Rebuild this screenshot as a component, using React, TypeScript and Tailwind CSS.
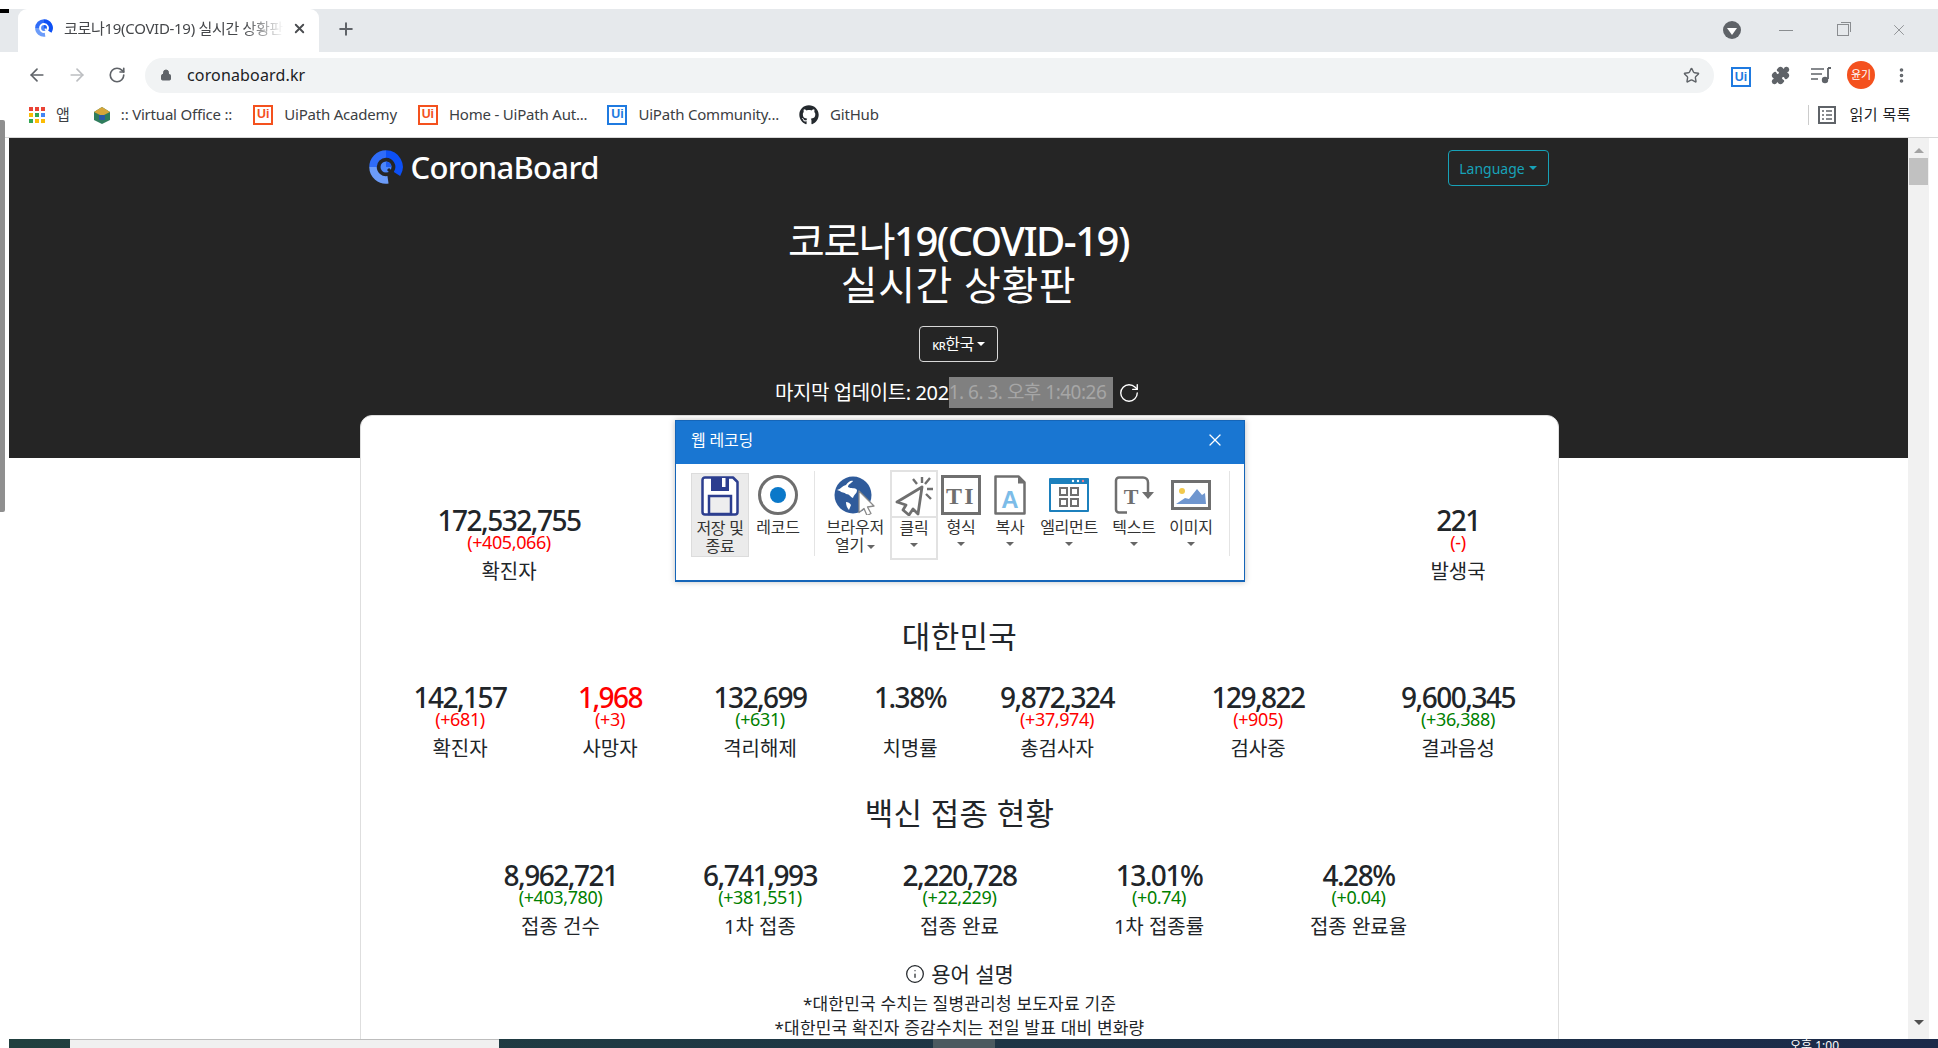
import { ArrowLeft, ArrowRight, RotateCw, Lock, Star, Puzzle, MoreVertical, X, Plus, Info } from 'lucide-react';
import { FaGithub } from 'react-icons/fa';
import type { ReactNode } from 'react';

const FONT = "font-['Noto_Sans','Noto_Sans_CJK_KR',sans-serif]";

type Stat = { value: string; delta?: string; deltaColor?: string; label: string; valueColor?: string; width?: string };

const koreaStats: Stat[] = [
  { value: '142,157', delta: '(+681)', deltaColor: 'text-[#ff0000]', label: '확진자', width: 'w-[150px]' },
  { value: '1,968', delta: '(+3)', deltaColor: 'text-[#ff0000]', label: '사망자', valueColor: 'text-[#ff0000]', width: 'w-[150px]' },
  { value: '132,699', delta: '(+631)', deltaColor: 'text-[#008000]', label: '격리해제', width: 'w-[150px]' },
  { value: '1.38%', label: '치명률', width: 'w-[150px]' },
  { value: '9,872,324', delta: '(+37,974)', deltaColor: 'text-[#ff0000]', label: '총검사자', width: 'w-[150px] -ml-[3px]' },
  { value: '129,822', delta: '(+905)', deltaColor: 'text-[#ff0000]', label: '검사중', width: 'w-[200px] ml-[26px]' },
  { value: '9,600,345', delta: '(+36,388)', deltaColor: 'text-[#008000]', label: '결과음성', width: 'w-[200px]' },
];

const vaccineStats: Stat[] = [
  { value: '8,962,721', delta: '(+403,780)', deltaColor: 'text-[#008000]', label: '접종 건수', width: 'w-[199.5px]' },
  { value: '6,741,993', delta: '(+381,551)', deltaColor: 'text-[#008000]', label: '1차 접종', width: 'w-[199.5px]' },
  { value: '2,220,728', delta: '(+22,229)', deltaColor: 'text-[#008000]', label: '접종 완료', width: 'w-[199.5px]' },
  { value: '13.01%', delta: '(+0.74)', deltaColor: 'text-[#008000]', label: '1차 접종률', width: 'w-[199.5px]' },
  { value: '4.28%', delta: '(+0.04)', deltaColor: 'text-[#008000]', label: '접종 완료율', width: 'w-[199.5px]' },
];

function StatBox({ stat }: { stat: Stat }) {
  return (
    <div className={`flex flex-col items-center shrink-0 ${stat.width ?? ''}`}>
      <div className={`text-[28px] leading-[30px] font-medium tracking-[-1.5px] ${stat.valueColor ?? 'text-[#212529]'}`}>{stat.value}</div>
      <div className={`text-[18px] leading-[20px] h-[20px] tracking-[-0.4px] -mt-[3px] ${stat.deltaColor ?? ''}`}>{stat.delta}</div>
      <div className="text-[20px] leading-[24px] mt-[8px] text-[#212529]">{stat.label}</div>
    </div>
  );
}

function UiLogo({ color, size = 20 }: { color: string; size?: number }) {
  return (
    <span
      className="inline-flex items-center justify-center border-2 bg-white font-bold leading-none font-['Liberation_Sans',sans-serif] shrink-0"
      style={{ borderColor: color, color, width: size, height: size, fontSize: size * 0.62 }}
    >
      Ui
    </span>
  );
}

function Bookmark({ icon, label, className }: { icon: ReactNode; label: string; className?: string }) {
  return (
    <div className={`flex items-center gap-[11px] ${className ?? ''}`}>
      {icon}
      <span className="text-[15px] text-[#3c4043] tracking-[-0.2px] whitespace-nowrap">{label}</span>
    </div>
  );
}

function AppsIcon() {
  const colors = ['#ea4335', '#ea4335', '#ea4335', '#fbbc04', '#34a853', '#4285f4', '#34a853', '#fbbc04', '#fbbc04'];
  return (
    <div className="grid grid-cols-3 gap-[2px] w-[16px] shrink-0">
      {colors.map((c, i) => (
        <span key={i} className="w-[4px] h-[4px]" style={{ backgroundColor: c }} />
      ))}
    </div>
  );
}

function CoronaLogo({ size, bg = '#252525' }: { size: number; bg?: string }) {
  return (
    <svg width={size} height={size} viewBox="0 0 34 34" className="shrink-0">
      <g fill="none" strokeWidth="7.5">
        <path d="M17 4a13 13 0 0 1 11 20" stroke="#0d50f5" />
        <path d="M17 4a13 13 0 0 0-13 13" stroke="#2f6cf8" />
        <path d="M4 17a13 13 0 0 0 15 12.8" stroke="#6c9cf9" />
      </g>
      <circle cx="17" cy="17" r="5.5" fill="#4c86f8" />
      <path d="M17 11.5a5.5 5.5 0 0 1 5.5 5.5H17z" fill="#1d5cf0" />
      <path d="M19 19l9 9" stroke={bg} strokeWidth="3" />
    </svg>
  );
}

function Caret({ className }: { className?: string }) {
  return <span className={`inline-block w-0 h-0 border-x-[4px] border-x-transparent border-t-[4px] ${className ?? 'border-t-[#666]'}`} />;
}

function SaveIcon() {
  return (
    <svg width="38" height="40" viewBox="0 0 38 40">
      <path d="M4 1.5h28l4.5 4.5v30a2.5 2.5 0 0 1-2.5 2.5H4A2.5 2.5 0 0 1 1.5 36V4A2.5 2.5 0 0 1 4 1.5z" fill="#fff" stroke="#2c3e8f" strokeWidth="2.5" strokeLinejoin="round" />
      <path d="M10 2h18v13H10z" fill="#2c3e8f" />
      <rect x="21" y="2" width="3.5" height="9" fill="#fff" />
      <rect x="8" y="20" width="22" height="18" fill="#eeeeee" stroke="#2c3e8f" strokeWidth="2.5" />
    </svg>
  );
}

function RecordIcon() {
  return (
    <svg width="40" height="40" viewBox="0 0 40 40">
      <circle cx="20" cy="20" r="18.5" fill="#fff" stroke="#6e6e6e" strokeWidth="3" />
      <circle cx="20" cy="20" r="8" fill="#0b78c9" />
    </svg>
  );
}

function BrowserIcon() {
  return (
    <svg width="42" height="40" viewBox="0 0 42 40">
      <circle cx="19" cy="20" r="18.5" fill="#2f5b9b" />
      <path d="M3 15c4-1 5-4 9-5 2-3 5-5 7-4-1 2-5 3-5 6 3 2 7 0 9 3 0 4-3 4-4 8-3-1-3-4-7-4-1-2-5-1-6-3z" fill="#fff" />
      <path d="M12 27c2 0 4 1 5 3l-2 5c-2-2-3-5-3-8z" fill="#fff" />
      <path d="M25 16l15 15-6.5 1 3.5 6.5-4 2-3-7-5 4z" fill="#fff" stroke="#8a8a8a" strokeWidth="1.3" strokeLinejoin="round" />
    </svg>
  );
}

function ClickIcon() {
  return (
    <svg width="38" height="40" viewBox="0 0 38 40">
      <path d="M27 11L2 26l9 3-3 5 6 5 4-6 5 5z" fill="#fff" stroke="#6f6f6f" strokeWidth="2.8" strokeLinejoin="round" />
      <g stroke="#6f6f6f" strokeWidth="2.4">
        <path d="M27 1v6M18 3l4 5M35 2l-5 6M38 13h-6M36 23l-5-5" />
      </g>
    </svg>
  );
}

function FormatIcon() {
  return (
    <svg width="40" height="40" viewBox="0 0 40 40">
      <rect x="1.5" y="1.5" width="37" height="37" fill="#fff" stroke="#6f6f6f" strokeWidth="3" />
      <text x="13" y="29" textAnchor="middle" fontFamily="Liberation Serif, serif" fontWeight="700" fontSize="24" fill="#6f6f6f">T</text>
      <text x="28" y="29" textAnchor="middle" fontFamily="Liberation Serif, serif" fontWeight="700" fontSize="24" fill="#6f6f6f">I</text>
    </svg>
  );
}

function CopyIcon() {
  return (
    <svg width="32" height="40" viewBox="0 0 32 40">
      <path d="M1.5 1.5h23l6 6v31h-29z" fill="#fff" stroke="#6f6f6f" strokeWidth="2.5" strokeLinejoin="round" />
      <path d="M24 1.5v7h6.5z" fill="#6f6f6f" />
      <text x="16" y="33" textAnchor="middle" fontFamily="Liberation Sans, sans-serif" fontWeight="700" fontSize="24" fill="#7cbce8">A</text>
    </svg>
  );
}

function ElementIcon() {
  return (
    <svg width="40" height="34" viewBox="0 0 40 34">
      <rect x="0" y="0" width="40" height="34" rx="1" fill="#1c80bd" />
      <rect x="2" y="6" width="36" height="26" fill="#fff" />
      <circle cx="24" cy="3" r="1.2" fill="#fff" />
      <circle cx="29" cy="3" r="1.2" fill="#fff" />
      <circle cx="34" cy="3" r="1.2" fill="#f47c8a" />
      <g fill="none" stroke="#6f6f6f" strokeWidth="2">
        <rect x="11" y="10" width="7" height="7" />
        <rect x="22" y="10" width="7" height="7" />
        <rect x="11" y="21" width="7" height="7" />
        <rect x="22" y="21" width="7" height="7" />
      </g>
    </svg>
  );
}

function TextIcon() {
  return (
    <svg width="40" height="38" viewBox="0 0 40 38">
      <path d="M13 36.5H5a3 3 0 0 1-3-3V4.5a3 3 0 0 1 3-3h24c3 0 5 2 5 5v11" fill="none" stroke="#6f6f6f" strokeWidth="2.5" />
      <path d="M28 16h12l-6 7z" fill="#6f6f6f" />
      <text x="17" y="28" textAnchor="middle" fontFamily="Liberation Serif, serif" fontWeight="700" fontSize="22" fill="#6f6f6f">T</text>
    </svg>
  );
}

function ImageIcon() {
  return (
    <svg width="40" height="30" viewBox="0 0 40 30">
      <rect x="1.5" y="1.5" width="37" height="27" fill="#fff" stroke="#6f6f6f" strokeWidth="3" />
      <circle cx="11" cy="11" r="3" fill="#f2c94c" />
      <path d="M5 24l9-6 4 1 8-10 5 6 3-2 1 11z" fill="#6f96cf" />
    </svg>
  );
}

type Tool = { icon: ReactNode; lines: string[]; width: string; caret?: boolean; inlineCaret?: boolean; divider?: boolean };

const tools: Tool[] = [
  { icon: <SaveIcon />, lines: ['저장 및', '종료'], width: 'w-[58px] mt-[3px] h-[84px] bg-[#ebebeb] border border-[#dcdcdc]' },
  { icon: <RecordIcon />, lines: ['레코드'], width: 'w-[58px] mt-[3px]' },
  { icon: <BrowserIcon />, lines: ['브라우저', '열기'], inlineCaret: true, width: 'w-[56px] ml-[20px] mt-[3px]' },
  { icon: <ClickIcon />, lines: ['클릭'], caret: true, divider: true, width: 'w-[48px] ml-[7px] h-[90px] pt-[3px] border-2 border-[#e2e2e2]' },
  { icon: <FormatIcon />, lines: ['형식'], caret: true, width: 'w-[46px] mt-[3px]' },
  { icon: <CopyIcon />, lines: ['복사'], caret: true, width: 'w-[48px] ml-[2px] mt-[3px]' },
  { icon: <ElementIcon />, lines: ['엘리먼트'], caret: true, width: 'w-[70px] mt-[3px]' },
  { icon: <TextIcon />, lines: ['텍스트'], caret: true, width: 'w-[60px] mt-[3px]' },
  { icon: <ImageIcon />, lines: ['이미지'], caret: true, width: 'w-[54px] mt-[3px]' },
];

function ToolButton({ tool }: { tool: Tool }) {
  return (
    <div className={`flex flex-col items-center shrink-0 pt-[1px] ${tool.width}`}>
      <div className={`flex items-center justify-center self-stretch ${tool.divider ? 'h-[43px] border-b-2 border-[#e2e2e2]' : 'h-[41px] mb-[2px]'}`}>{tool.icon}</div>
      <div className="mt-[1px] text-[16px] leading-[18px] text-[#333] text-center whitespace-nowrap tracking-[-0.3px]">
        {tool.lines.map((line, i) => (
          <div key={line}>
            {line}
            {tool.inlineCaret && i === tool.lines.length - 1 && <Caret className="ml-[3px] align-middle border-t-[#666]" />}
          </div>
        ))}
      </div>
      {tool.caret && <Caret className="mt-[6px] border-t-[#666]" />}
    </div>
  );
}

function RecordingDialog() {
  return (
    <div className="absolute left-[666px] top-[282px] w-[570px] h-[162px] bg-white border border-[#1565b8] border-b-2 shadow-[0_0_6px_rgba(0,0,0,0.25)] flex flex-col">
      <div className="h-[43px] shrink-0 bg-[#1976d2] flex items-center justify-between pl-[15px] pr-[19px] pb-[5px] text-white">
        <span className="text-[16px] tracking-[-0.2px]">웹 레코딩</span>
        <X size={20} strokeWidth={1.5} />
      </div>
      <div className="flex items-start pt-[6px] pl-[15px]">
        {tools.slice(0, 2).map((t) => (
          <ToolButton key={t.lines[0]} tool={t} />
        ))}
        <div className="absolute left-[138px] top-[50px] w-px h-[85px] bg-[#e4e4e4]" />
        {tools.slice(2).map((t) => (
          <ToolButton key={t.lines[0]} tool={t} />
        ))}
        <div className="absolute left-[553px] top-[50px] w-px h-[85px] bg-[#e4e4e4]" />
      </div>
    </div>
  );
}

export default function App() {
  return (
    <div className={`w-[1938px] h-[1048px] overflow-hidden bg-white flex flex-col relative ${FONT}`}>
      <div className="h-[9px] shrink-0 bg-white" />
      {/* tab strip */}
      <div className="h-[43px] shrink-0 bg-[#e6e9ec] flex items-end relative">
        <div className="absolute left-0 top-0 w-[9px] h-[4px] bg-black" />
        <div className="ml-[18px] w-[301px] h-[43px] bg-white rounded-t-[9px] flex items-center pl-[17px] pr-[11px] pb-[5px]">
          <CoronaLogo size={18} bg="#ffffff" />
          <span className="ml-[11px] w-[220px] overflow-hidden whitespace-nowrap text-[15px] text-[#45474a] tracking-[-0.3px] [mask-image:linear-gradient(90deg,#000_82%,transparent)]">
            코로나19(COVID-19) 실시간 상황판
          </span>
          <X size={15} strokeWidth={3} className="ml-[8px] text-[#4a4c50] shrink-0" />
        </div>
        <Plus size={20} strokeWidth={2.4} className="ml-[17px] mb-[13px] text-[#5f6368]" />
        <div className="ml-auto flex items-center pb-[13px] pr-[30px]">
          <span className="w-[18px] h-[18px] rounded-full bg-[#5f6368] flex items-center justify-center">
            <span className="w-0 h-0 border-x-[5px] border-x-transparent border-t-[7px] border-t-white mt-[2px]" />
          </span>
          <span className="ml-[38px] w-[14px] h-px bg-[#8a8d90]" />
          <span className="ml-[44px] w-[12px] h-[12px] border border-[#8a8d90] relative bg-[#e6e9ec]">
            <span className="absolute -top-[3px] -right-[3px] w-[10px] h-[10px] border-t border-r border-[#8a8d90]" />
          </span>
          <X size={18} strokeWidth={1} className="ml-[41px] text-[#77797c]" />
        </div>
      </div>
      {/* toolbar */}
      <div className="h-[46px] shrink-0 flex items-center pl-[27px]">
        <ArrowLeft size={20} strokeWidth={2} className="text-[#5f6368]" />
        <ArrowRight size={20} strokeWidth={2} className="ml-[20px] text-[#bcbec1]" />
        <RotateCw size={18} strokeWidth={2.2} className="ml-[21px] text-[#5f6368]" />
        <div className="ml-[19px] w-[1569px] h-[35px] bg-[#f1f3f4] rounded-full flex items-center pl-[15px] pr-[14px]">
          <Lock size={12} fill="#5f6368" className="text-[#5f6368]" />
          <span className="ml-[15px] text-[16px] text-[#202124] tracking-[0.15px]">coronaboard.kr</span>
          <Star size={17} strokeWidth={2} className="ml-auto text-[#5f6368]" />
        </div>
        <div className="ml-[17px]"><UiLogo color="#1f7ae0" size={20} /></div>
        <Puzzle size={19} fill="#5f6368" className="ml-[20px] text-[#5f6368]" />
        <svg width="20" height="18" viewBox="0 0 20 18" className="ml-[21px]">
          <path d="M0 3h13M0 8h11M0 13h7" stroke="#5f6368" strokeWidth="1.6" />
          <path d="M17 2v11" stroke="#5f6368" strokeWidth="1.8" />
          <path d="M17 1h3v2h-3z" fill="#5f6368" />
          <circle cx="14" cy="14" r="3.2" fill="#5f6368" />
        </svg>
        <span className="ml-[16px] w-[28px] h-[28px] rounded-full bg-[#f4511e] text-white text-[11px] flex items-center justify-center shrink-0">윤기</span>
        <MoreVertical size={19} strokeWidth={2.6} className="ml-[17px] text-[#5f6368]" />
      </div>
      {/* bookmarks */}
      <div className="h-[40px] shrink-0 border-b border-[#d8d8d8] flex items-center pl-[29px] pb-[6px] relative">
        <AppsIcon />
        <span className="ml-[11px] text-[15px] text-[#3c4043]">앱</span>
        <Bookmark
          className="ml-[22px]"
          label=":: Virtual Office ::"
          icon={
            <svg width="20" height="20" viewBox="0 0 20 20" className="-mr-[2px]">
              <path d="M10 2l8 5v8l-8 4-8-4V7z" fill="#2f7d5d" />
              <path d="M10 2l8 5-8 4-8-4z" fill="#d6a63a" />
              <rect x="7" y="10" width="6" height="5" fill="#2a5aa8" />
            </svg>
          }
        />
        <Bookmark className="ml-[21px]" label="UiPath Academy" icon={<UiLogo color="#f4511e" />} />
        <Bookmark className="ml-[21px]" label="Home - UiPath Aut..." icon={<UiLogo color="#f4511e" />} />
        <Bookmark className="ml-[20px]" label="UiPath Community..." icon={<UiLogo color="#1f7ae0" />} />
        <Bookmark className="ml-[20px]" label="GitHub" icon={<FaGithub size={20} className="text-[#24292e]" />} />
        <div className="ml-auto mr-[27px] flex items-center">
          <span className="w-px h-[20px] bg-[#ccc] mr-[9px]" />
          <svg width="18" height="18" viewBox="0 0 18 18">
            <rect x="1" y="1" width="16" height="16" fill="none" stroke="#5f6368" strokeWidth="2" />
            <path d="M4 5h2M8 5h6M4 9h2M8 9h6M4 13h2M8 13h6" stroke="#5f6368" strokeWidth="1.5" />
          </svg>
          <span className="ml-[13px] text-[15px] text-[#202124] tracking-[0.5px]">읽기 목록</span>
        </div>
      </div>
      {/* page area */}
      <div className="h-[901px] shrink-0 flex relative">
        <div className="w-[9px] shrink-0 bg-white relative">
          <div className="absolute left-0 -top-[18px] w-[5px] h-[392px] bg-[#8f8f8f] rounded-r-[2px]" />
        </div>
        <div className="w-[1899px] shrink-0 relative overflow-hidden">
          <div className="h-[320px] bg-[#252525] flex flex-col items-center text-white">
            <div className="w-[1180px] flex items-center justify-between pt-[12px]">
              <div className="flex items-center gap-[8px] mb-[2px]">
                <CoronaLogo size={34} />
                <span className="text-[31px] leading-[34px] font-medium tracking-[-0.7px]">CoronaBoard</span>
              </div>
              <div className="w-[101px] h-[36px] rounded-[4px] border border-[#17a2b8] text-[#17a2b8] text-[14px] flex items-center justify-center gap-[4px]">
                Language
                <Caret className="border-t-[#17a2b8]" />
              </div>
            </div>
            <h1 className="mt-[33px] text-[40px] leading-[44px] text-center">
              <span className="block tracking-[-1.5px]">코로나<span className="font-medium">19(COVID-19)</span></span>
              <span className="block tracking-[0.6px]">실시간 상황판</span>
            </h1>
            <div className="mt-[19px] w-[79px] h-[36px] rounded-[4px] border border-[#d8d8d8] flex items-center justify-center gap-[3px] text-[16px] tracking-[-0.4px]">
              <span><span className="text-[11px] font-medium">KR</span>한국</span>
              <Caret className="border-t-white" />
            </div>
            <div className="mt-[15px] flex items-center text-[20px] leading-[31px] tracking-[-0.4px] w-[367px] shrink-0">
              <span className="whitespace-nowrap">마지막 업데이트: 202</span>
              <span className="bg-[#808080] text-[#a6a6a6] text-[19px] h-[31px] w-[164px] shrink-0 whitespace-nowrap tracking-[-0.5px]">1. 6. 3. 오후 1:40:26</span>
              <RotateCw size={22} strokeWidth={1.5} className="ml-[5px] shrink-0" />
            </div>
          </div>
          <div className="absolute left-[351px] top-[277px] w-[1199px] h-[640px] bg-white rounded-t-[12px] border border-[#dedede] text-center flex flex-col items-center">
            <div className="w-full flex justify-between pl-[48px] pt-[89px]">
              <StatBox stat={{ value: '172,532,755', delta: '(+405,066)', deltaColor: 'text-[#ff0000]', label: '확진자', width: 'w-[200px]' }} />
              <StatBox stat={{ value: '221', delta: '(-)', deltaColor: 'text-[#ff0000]', label: '발생국', width: 'w-[200px]' }} />
            </div>
            <h2 className="mt-[34px] text-[31px] leading-[36px] text-[#212529] tracking-[0.3px]">대한민국</h2>
            <div className="w-full flex pl-[24px] mt-[28px]">
              {koreaStats.map((s) => (
                <StatBox key={s.label} stat={s} />
              ))}
            </div>
            <h2 className="mt-[34px] text-[31px] leading-[36px] text-[#212529] tracking-[0.3px]">백신 접종 현황</h2>
            <div className="w-full flex justify-center mt-[29px]">
              {vaccineStats.map((s) => (
                <StatBox key={s.label} stat={s} />
              ))}
            </div>
            <div className="mt-[22px] flex items-center gap-[6px] text-[21px] leading-[26px] text-[#212529]">
              <Info size={20} strokeWidth={1.5} />
              용어 설명
            </div>
            <p className="mt-[5px] text-[17px] leading-[24px] tracking-[0.2px] text-[#212529] whitespace-nowrap">*대한민국 수치는 질병관리청 보도자료 기준</p>
            <p className="text-[17px] leading-[24px] tracking-[0.2px] text-[#212529] whitespace-nowrap">*대한민국 확진자 증감수치는 전일 발표 대비 변화량</p>
          </div>
          <RecordingDialog />
        </div>
        <div className="w-[21px] shrink-0 bg-[#f1f1f1] flex flex-col items-center relative">
          <span className="mt-[10px] w-0 h-0 border-x-[5px] border-x-transparent border-b-[5px] border-b-[#a3a3a3]" />
          <span className="mt-[5px] w-[19px] h-[27px] bg-[#c1c1c1]" />
          <span className="absolute bottom-[14px] w-0 h-0 border-x-[5px] border-x-transparent border-t-[5px] border-t-[#505050]" />
        </div>
        <div className="w-[9px] shrink-0 bg-white" />
      </div>
      {/* taskbar */}
      <div className="absolute left-[9px] right-0 bottom-0 h-[9px] bg-gradient-to-r from-[#21403f] to-[#1c2a4a] flex overflow-hidden">
        <div className="ml-[61px] w-[429px] bg-[#f0f0f0] border-t border-[#bdbdbd]" />
        <div className="ml-[434px] w-[62px] bg-[#4b5a60]" />
        <span className="ml-[795px] text-[12px] leading-[14px] text-white">오후 1:00</span>
      </div>
    </div>
  );
}
